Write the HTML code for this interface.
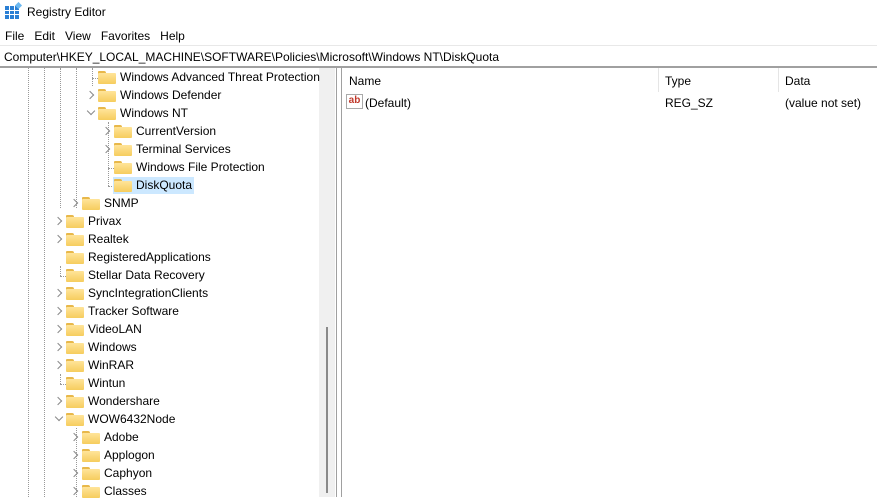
<!DOCTYPE html>
<html><head><style>
body{margin:0;width:877px;height:497px;overflow:hidden;background:#fff;font-family:"Liberation Sans",sans-serif;font-size:12px;color:#000;position:relative}
.a{position:absolute;white-space:nowrap}
.f{position:absolute;width:18px;height:13px}
.f:before{content:"";position:absolute;left:0;top:0;width:8px;height:4px;background:#e8b84a;border-radius:1px 2px 0 0}
.f:after{content:"";position:absolute;left:0;top:2px;width:18px;height:11px;background:linear-gradient(#ffe49a,#f6cd5e);border-radius:1px}
.c{position:absolute;width:5px;height:5px;border-right:1px solid #888;border-bottom:1px solid #888;transform:rotate(-45deg)}
.c.d{transform:rotate(45deg)}
.dv{position:absolute;width:0;border-left:1px dotted #999}
.dh{position:absolute;height:0;border-top:1px dotted #999}
</style></head><body>
<svg class="a" style="left:5px;top:2px" width="18" height="18"><rect x="0" y="4" width="14" height="13" fill="#2a7fd4"/><g stroke="#fff" stroke-width="1"><line x1="4.5" y1="4" x2="4.5" y2="17"/><line x1="9.5" y1="4" x2="9.5" y2="17"/><line x1="0" y1="8.5" x2="14" y2="8.5"/><line x1="0" y1="12.5" x2="14" y2="12.5"/></g><rect x="11" y="1" width="5" height="5" fill="#6cb8f0" transform="rotate(45 13.5 3.5)"/></svg>
<div class="a" style="left:27px;top:5px;font-size:12px">Registry Editor</div>
<div class="a" style="left:5px;top:29px;font-size:12px">File&nbsp;&nbsp;&nbsp;Edit&nbsp;&nbsp;&nbsp;View&nbsp;&nbsp;&nbsp;Favorites&nbsp;&nbsp;&nbsp;Help</div>
<div class="a" style="left:0;top:45px;width:877px;height:1px;background:#e8e8e8"></div>
<div class="a" style="left:4px;top:50px;font-size:12px">Computer\HKEY_LOCAL_MACHINE\SOFTWARE\Policies\Microsoft\Windows NT\DiskQuota</div>
<div class="a" style="left:0;top:66px;width:877px;height:2px;background:#a0a0a0"></div>
<div class="a" style="left:319px;top:68px;width:16px;height:429px;background:#f0f0f0"></div>
<div class="a" style="left:326px;top:327px;width:2px;height:166px;background:#8a8a8a"></div>
<div class="a" style="left:336px;top:68px;width:1px;height:429px;background:#a0a0a0"></div>
<div class="a" style="left:341px;top:68px;width:1px;height:429px;background:#a0a0a0"></div>
<div class="dv" style="left:28px;top:68px;height:429px"></div>
<div class="dv" style="left:44px;top:68px;height:429px"></div>
<div class="dv" style="left:60px;top:68px;height:140px"></div>
<div class="dv" style="left:76px;top:68px;height:140px"></div>
<div class="dv" style="left:92px;top:68px;height:18px"></div>
<div class="dv" style="left:108px;top:122px;height:64px"></div>
<div class="dh" style="left:92px;top:78px;width:6px"></div>
<div class="dh" style="left:108px;top:168px;width:6px"></div>
<div class="dh" style="left:108px;top:186px;width:6px"></div>
<div class="dv" style="left:60px;top:266px;height:10px"></div>
<div class="dh" style="left:60px;top:276px;width:6px"></div>
<div class="dv" style="left:60px;top:374px;height:10px"></div>
<div class="dh" style="left:60px;top:384px;width:6px"></div>
<div class="dv" style="left:76px;top:428px;height:69px"></div>
<div class="a" style="left:113px;top:177px;width:81px;height:17px;background:#cce8ff"></div>
<div id="tree"></div>
<script>
var rows=[[2,"Windows Advanced Threat Protection",0],[2,"Windows Defender",1],[2,"Windows NT",2],[3,"CurrentVersion",1],[3,"Terminal Services",1],[3,"Windows File Protection",0],[3,"DiskQuota",0],[1,"SNMP",1],[0,"Privax",1],[0,"Realtek",1],[0,"RegisteredApplications",0],[0,"Stellar Data Recovery",0],[0,"SyncIntegrationClients",1],[0,"Tracker Software",1],[0,"VideoLAN",1],[0,"Windows",1],[0,"WinRAR",1],[0,"Wintun",0],[0,"Wondershare",1],[0,"WOW6432Node",2],[1,"Adobe",1],[1,"Applogon",1],[1,"Caphyon",1],[1,"Classes",1]];
var h="";
rows.forEach(function(r,i){var y=69+i*18,x=88+r[0]*16;
if(r[2]==1)h+='<div class="c" style="left:'+(x-33)+'px;top:'+(y+5)+'px"></div>';
if(r[2]==2)h+='<div class="c d" style="left:'+(x-32)+'px;top:'+(y+3)+'px"></div>';
h+='<div class="f" style="left:'+(x-22)+'px;top:'+(y+2)+'px"></div>';
h+='<div class="a" style="left:'+x+'px;top:'+(y+1)+'px;font-size:12px">'+r[1]+'</div>';});
document.getElementById("tree").innerHTML=h;
</script>
<div class="a" style="left:349px;top:74px;font-size:12px">Name</div>
<div class="a" style="left:658px;top:68px;width:1px;height:24px;background:#e5e5e5"></div>
<div class="a" style="left:665px;top:74px;font-size:12px">Type</div>
<div class="a" style="left:778px;top:68px;width:1px;height:24px;background:#e5e5e5"></div>
<div class="a" style="left:785px;top:74px;font-size:12px">Data</div>
<div class="a" style="left:346px;top:94px;width:15px;height:13px;border:1px solid #aaa;background:#fff;font-size:10px;color:#c0392b;font-weight:bold;line-height:11px;text-align:center">ab</div>
<div class="a" style="left:365px;top:96px;font-size:12px">(Default)</div>
<div class="a" style="left:665px;top:96px;font-size:12px">REG_SZ</div>
<div class="a" style="left:785px;top:96px;font-size:12px">(value not set)</div>
</body></html>
